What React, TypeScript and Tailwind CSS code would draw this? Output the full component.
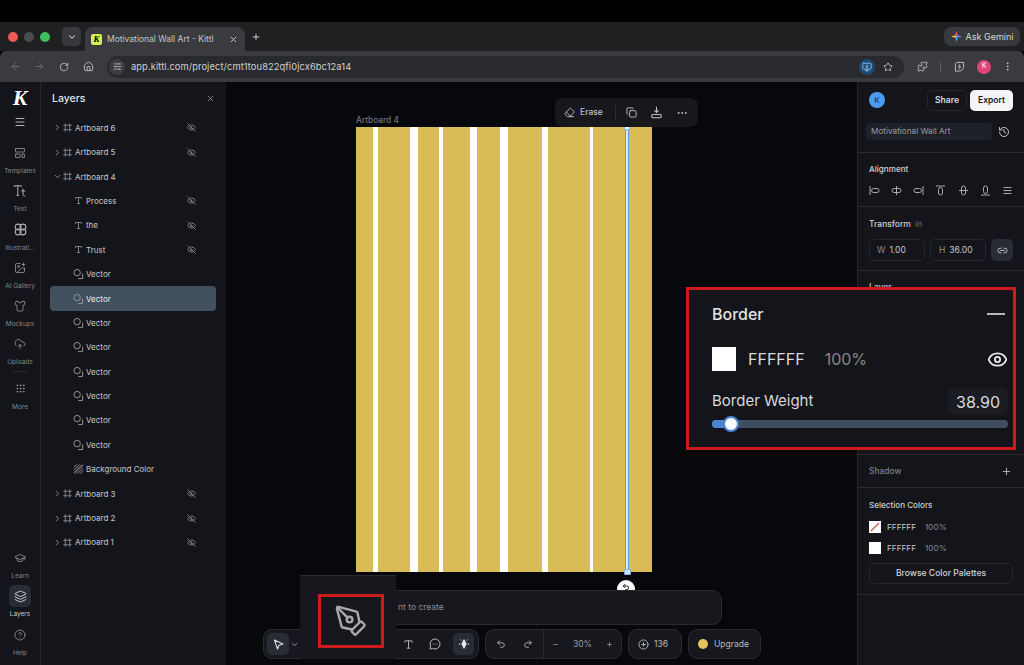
import React from "react";
import {
  ChevronDown, ChevronRight, X, Plus, ArrowLeft, ArrowRight, RotateCw, Home, SlidersHorizontal, MonitorDown, Star, Puzzle, EllipsisVertical,
  Menu, Frame, EyeOff, Type, LayoutTemplate, Shirt, CloudUpload, Grip, GraduationCap, Layers, CircleHelp, ImagePlus,
  Link2, History, Eraser, Copy, Ellipsis, PenTool, MessageCircleMore, Undo2, Redo2, Minus, CirclePlus, Eye,
} from "lucide-react";

const VectorIcon = () => (
  <svg width="12" height="12" viewBox="0 0 12 12" fill="none" stroke="currentColor" strokeWidth="1">
    <circle cx="4.5" cy="4.5" r="3.5" />
    <path d="M10.5 5.5V11H5.5" />
  </svg>
);
const HatchIcon = () => (
  <svg width="12" height="12" viewBox="0 0 12 12" fill="none" stroke="currentColor" strokeWidth="1">
    <path d="M1 4L4 1M1 7L7 1M1 10L10 1M2 11L11 2M5 11L11 5M8 11L11 8" />
  </svg>
);
const TtIcon = () => (
  <svg width="14" height="14" viewBox="0 0 16 16" fill="none" stroke="currentColor" strokeWidth="1.1">
    <path d="M1.5 3.5V2H9.5V3.5M5.5 2V13M4 13H7M9.5 8H14M11.5 5.5V12.5C11.5 13.5 12.5 14 14 13.5" />
  </svg>
);
const FlowerIcon = () => (
  <svg width="13" height="13" viewBox="0 0 16 16" fill="none" stroke="currentColor" strokeWidth="1.3">
    <circle cx="5" cy="5" r="3.6" /><circle cx="11" cy="5" r="3.6" /><circle cx="5" cy="11" r="3.6" /><circle cx="11" cy="11" r="3.6" />
  </svg>
);
const Sparkle = () => (
  <svg width="14" height="14" viewBox="0 0 14 14" fill="#e5e7eb">
    <path d="M7 3L9 7L7 11L5 7Z" stroke="#e5e7eb" strokeWidth="1.2" strokeLinejoin="round" />
    <path d="M2 7h1.5M10.5 7H12M3.5 2.5l1 1M10.5 2.5l-1 1" stroke="#e5e7eb" strokeWidth="1" />
  </svg>
);
const PlaceIcon = () => (
  <svg width="13" height="13" viewBox="0 0 16 16" fill="none" stroke="#c4c5c9" strokeWidth="1.3">
    <path d="M8 1V8M5.5 5.5L8 8L10.5 5.5" />
    <rect x="2" y="10.5" width="12" height="4" rx="2" />
  </svg>
);
const Gemini = () => (
  <svg width="11" height="11" viewBox="0 0 10 10">
    <path d="M5 0L6.2 3.8L5 5L3.8 3.8Z" fill="#e8655a" />
    <path d="M10 5L6.2 6.2L5 5L6.2 3.8Z" fill="#5b8ff0" />
    <path d="M5 10L3.8 6.2L5 5L6.2 6.2Z" fill="#5b8ff0" />
    <path d="M0 5L3.8 3.8L5 5L3.8 6.2Z" fill="#f2c14e" />
  </svg>
);
const BoltCircle = () => (
  <svg width="11" height="11" viewBox="0 0 12 12" fill="none" stroke="currentColor" strokeWidth="1">
    <path d="M3 1.5H10.5V6A5 5 0 0 1 5.5 11H1.5V5A3.5 3.5 0 0 1 3 1.5Z" />
    <path d="M6.5 3.5L4.8 6.2H7L5.5 8.8" />
  </svg>
);

const alignPaths = [
  <><path d="M1 1V10" /><rect x="2.5" y="3.5" width="7.5" height="4" rx="2" /></>,
  <><path d="M5.5 1V10" /><rect x="1" y="3.5" width="9" height="4" rx="2" /></>,
  <><path d="M10 1V10" /><rect x="1" y="3.5" width="7.5" height="4" rx="2" /></>,
  <><path d="M1 1H10" /><rect x="3.5" y="2.5" width="4" height="7.5" rx="2" /></>,
  <><path d="M1 5.5H10" /><rect x="3.5" y="1" width="4" height="9" rx="2" /></>,
  <><path d="M1 10H10" /><rect x="3.5" y="1" width="4" height="7.5" rx="2" /></>,
  <><path d="M1.5 2.5H9.5M1.5 5.5H9.5M1.5 8.5H9.5" /></>,
];

function RailItem({ icon, label, active }: { icon: React.ReactNode; label: string; active?: boolean }) {
  return (
    <div className="h-[38.3px] flex flex-col items-center justify-start">
      <div className={`w-[22px] h-[22px] shrink-0 flex items-center justify-center rounded-[5px] text-[#b4b5b9] ${active ? "bg-[#2a2c35] text-[#e8e8ea]" : ""}`}>{icon}</div>
      <div className={`text-[6.5px] leading-[9px] mt-[3px] whitespace-nowrap ${active ? "text-[#c8c9cc]" : "text-[#85878c]"}`}>{label}</div>
    </div>
  );
}

function Row({ indent, caret, icon, label, hidden, active }: { indent: number; caret?: "r" | "d"; icon: React.ReactNode; label: string; hidden?: boolean; active?: boolean }) {
  return (
    <div className={`h-[24.4px] flex items-center rounded-[4px] text-[8px] text-[#c6c7ca] ${active ? "bg-[#40505f] text-[#eceef0]" : ""}`}>
      <div className="flex items-center" style={{ paddingLeft: indent }}>
        {caret && (
          <span className="w-[9px] text-[#a8a9ad] flex">
            {caret === "r" ? <ChevronRight size={9} /> : <ChevronDown size={9} />}
          </span>
        )}
        <span className="w-[11px] flex justify-center text-[#9c9da2]">{icon}</span>
        <span className="ml-[2px] whitespace-nowrap">{label}</span>
      </div>
      {hidden && <EyeOff size={9} className="ml-auto mr-[20px] text-[#9c9da2]" />}
    </div>
  );
}

const stripes = [[17, 4.5], [54, 8], [83, 4], [114, 7], [144, 8], [186, 6], [234, 3]];

export default function App() {
  return (
    <div className="w-[1024px] h-[665px] overflow-hidden bg-black flex flex-col relative font-['Inter','Liberation_Sans',sans-serif]">
      {/* top black */}
      <div className="h-[22px] shrink-0 bg-black" />

      {/* tab bar */}
      <div className="h-[29px] shrink-0 bg-[#202023] flex items-center relative">
        <div className="flex items-center gap-[6px] ml-[8px] w-[48px] shrink-0">
          <span className="w-[10px] h-[10px] rounded-full bg-[#ee5a5a]" />
          <span className="w-[10px] h-[10px] rounded-full bg-[#4b4c50]" />
          <span className="w-[10px] h-[10px] rounded-full bg-[#3fc05e]" />
        </div>
        <div className="ml-[6px] w-[19px] h-[19px] rounded-[5px] bg-[#38393c] flex items-center justify-center text-[#d4d5d7]"><ChevronDown size={10} strokeWidth={2.5} /></div>
        <div className="ml-[4px] self-end w-[160px] h-[24px] rounded-t-[8px] bg-[#3a3b3e] flex items-center pl-[6px] pr-[7px]">
          <span className="w-[11px] h-[11px] rounded-[2px] bg-[#d6f04a] flex items-center justify-center text-[9px] leading-none font-bold italic text-black font-['Liberation_Serif',serif]">K</span>
          <span className="ml-[5px] text-[8.5px] text-[#c4c5c7] whitespace-nowrap">Motivational Wall Art - Kittl</span>
          <X size={9} className="ml-auto text-[#dcdcde]" strokeWidth={2.2} />
        </div>
        <Plus size={10} className="ml-[6px] text-[#d2d3d5]" strokeWidth={2.2} />
        <div className="ml-auto mr-[4px] w-[76px] h-[19px] rounded-[7px] bg-[#38393c] flex items-center justify-center gap-[4px] text-[9px] text-[#d6d7d9]">
          <Gemini /> <span>Ask Gemini</span>
        </div>
      </div>

      {/* url bar */}
      <div className="h-[31px] shrink-0 bg-[#3a3b3e] rounded-t-[6px] flex items-center text-[#c4c5c7]">
        <ArrowLeft size={11} className="ml-[10px] text-[#6d6e71]" />
        <ArrowRight size={11} className="ml-[13px] text-[#6d6e71]" />
        <RotateCw size={10} className="ml-[14px]" />
        <Home size={11} className="ml-[14px]" />
        <div className="ml-[13px] w-[797px] shrink-0 h-[22px] rounded-full bg-[#292a2d] flex items-center pl-[2px] pr-[11px]">
          <span className="w-[16px] h-[16px] rounded-full bg-[#3b3c40] flex items-center justify-center"><SlidersHorizontal size={9} /></span>
          <span className="ml-[6px] text-[9.3px] text-[#d0d1d3] tracking-[0.1px]">app.kittl.com/project/cmt1tou822qfi0jcx6bc12a14</span>
          <span className="ml-auto w-[16px] h-[16px] rounded-full bg-[#1d4a70] flex items-center justify-center text-[#9cc9f5]"><MonitorDown size={10} /></span>
          <Star size={10} className="ml-[8px]" />
        </div>
        <Puzzle size={11} className="ml-[13px]" />
        <span className="ml-[12px] w-px h-[11px] bg-[#5a5b5e]" />
        <span className="ml-[13px] flex"><BoltCircle /></span>
        <span className="ml-[12px] w-[14px] h-[14px] rounded-full bg-[#e0457b] flex items-center justify-center text-[7px] text-white">K</span>
        <EllipsisVertical size={11} className="ml-[11px]" />
      </div>

      {/* app */}
      <div className="flex-1 flex min-h-0 bg-[#07080c]">
        {/* rail */}
        <div className="w-[41px] shrink-0 bg-[#14151a] border-r border-[#26272c] flex flex-col items-center">
          <div className="h-[31px] flex items-center text-[22px] leading-none font-bold italic text-white font-['Liberation_Serif',serif]">K</div>
          <Menu size={12} className="text-[#b4b5b9] mt-[3px]" />
          <div className="mt-[14px] w-full">
            <RailItem icon={<LayoutTemplate size={12} strokeWidth={1.3} />} label="Templates" />
            <RailItem icon={<TtIcon />} label="Text" />
            <RailItem icon={<FlowerIcon />} label="Illustrati..." />
            <RailItem icon={<ImagePlus size={12} strokeWidth={1.3} />} label="AI Gallery" />
            <RailItem icon={<Shirt size={12} strokeWidth={1.3} />} label="Mockups" />
            <RailItem icon={<CloudUpload size={12} strokeWidth={1.3} />} label="Uploads" />
            <div className="w-[16px] h-px bg-[#2a2b30] mx-auto -mt-[1px] mb-[6px]" />
            <RailItem icon={<Grip size={11} strokeWidth={1.3} />} label="More" />
          </div>
          <div className="mt-auto mb-[3px] w-full">
            <RailItem icon={<GraduationCap size={12} strokeWidth={1.3} />} label="Learn" />
            <RailItem icon={<Layers size={13} strokeWidth={1.5} />} label="Layers" active />
            <RailItem icon={<CircleHelp size={12} strokeWidth={1.3} />} label="Help" />
          </div>
        </div>

        {/* layers */}
        <div className="w-[185px] shrink-0 bg-[#14151a] pl-[9px] pr-[10px]">
          <div className="h-[33.6px] flex items-center justify-between pl-[2px]">
            <span className="text-[10.5px] font-medium text-[#e2e3e5]">Layers</span>
            <X size={9} className="text-[#a0a1a5] mr-[1px]" />
          </div>
          <Row indent={3} caret="r" icon={<Frame size={9} />} label="Artboard 6" hidden />
          <Row indent={3} caret="r" icon={<Frame size={9} />} label="Artboard 5" hidden />
          <Row indent={3} caret="d" icon={<Frame size={9} />} label="Artboard 4" />
          <Row indent={23} icon={<Type size={9} />} label="Process" hidden />
          <Row indent={23} icon={<Type size={9} />} label="the" hidden />
          <Row indent={23} icon={<Type size={9} />} label="Trust" hidden />
          <Row indent={23} icon={<VectorIcon />} label="Vector" />
          <Row indent={23} icon={<VectorIcon />} label="Vector" active />
          <Row indent={23} icon={<VectorIcon />} label="Vector" />
          <Row indent={23} icon={<VectorIcon />} label="Vector" />
          <Row indent={23} icon={<VectorIcon />} label="Vector" />
          <Row indent={23} icon={<VectorIcon />} label="Vector" />
          <Row indent={23} icon={<VectorIcon />} label="Vector" />
          <Row indent={23} icon={<VectorIcon />} label="Vector" />
          <Row indent={23} icon={<HatchIcon />} label="Background Color" />
          <Row indent={3} caret="r" icon={<Frame size={9} />} label="Artboard 3" hidden />
          <Row indent={3} caret="r" icon={<Frame size={9} />} label="Artboard 2" hidden />
          <Row indent={3} caret="r" icon={<Frame size={9} />} label="Artboard 1" hidden />
        </div>

        {/* canvas */}
        <div className="flex-1 relative min-w-0">
          <div className="absolute left-[130px] top-[33px] text-[8.3px] leading-[11px] text-[#74757a] font-medium">Artboard 4</div>
          <div className="absolute left-[130px] top-[45px] w-[296px] h-[445px] bg-[#d9bc55]">
            {stripes.map(([x, w]) => (
              <div key={x} className="absolute top-0 bottom-0 bg-white" style={{ left: x, width: w }} />
            ))}
            <div className="absolute top-0 bottom-0 left-[269px] w-[4px] bg-[#dcebfa] border-x border-[#5a9be0]" />
            <div className="absolute -top-[2px] left-[268px] w-[6px] h-[5px] rounded-[1px] bg-white border border-[#7fb2e8]" />
            <div className="absolute -bottom-[3px] left-[267.5px] w-[7px] h-[6px] rounded-[1px] bg-[#cfe2f7] border border-[#7fb2e8]" />
          </div>

          {/* selection toolbar */}
          <div className="absolute left-[329px] top-[16px] w-[143px] h-[29px] rounded-[8px] bg-[#17181c] flex items-center text-[#c0c1c5]">
            <Eraser size={11} className="ml-[9px]" />
            <span className="ml-[5px] text-[8.5px] font-medium">Erase</span>
            <span className="ml-[12px] w-px h-[15px] bg-[#2c2d32]" />
            <Copy size={11} className="ml-[10px]" />
            <span className="ml-[13px] flex"><PlaceIcon /></span>
            <Ellipsis size={12} className="ml-[13px]" />
          </div>

          {/* rotate handle */}
          <div className="absolute left-[391px] top-[498px] w-[18px] h-[18px] rounded-full bg-white flex items-start justify-center pt-[3px] text-black"><Undo2 size={8} strokeWidth={2.6} /></div>

          {/* prompt */}
          <div className="absolute left-[74px] top-[508px] w-[422px] h-[35px] rounded-[10px] bg-[#17181d] border border-[#2a2b30] flex items-center pl-[97px] text-[8.5px] text-[#8a8b90]">
            nt to create
          </div>

          {/* bottom toolbar */}
          <div className="absolute left-[37px] top-[547px] flex gap-[6px] text-[#b8b9bd]">
            <div className="w-[216px] h-[30px] rounded-[9px] bg-[#17181d] border border-[#2a2b30] flex items-center pl-[3px]">
              <span className="w-[22px] h-[22px] rounded-[5px] bg-[#2a2c35] flex items-center justify-center text-[#dcdde0]">
                <svg width="11" height="11" viewBox="0 0 11 11" fill="none" stroke="currentColor" strokeWidth="1.1" strokeLinejoin="round"><path d="M1.5 1L10 5L6 6.2L4.5 10Z" /></svg>
              </span>
              <ChevronDown size={9} className="ml-[1px]" />
              <Type size={11} className="ml-[104px]" />
              <MessageCircleMore size={12} className="ml-[15px]" />
              <span className="ml-[12px] w-[21px] h-[22px] rounded-[5px] bg-[#2a2c35] flex items-center justify-center"><Sparkle /></span>
            </div>
            <div className="w-[137px] h-[30px] rounded-[9px] bg-[#17181d] border border-[#2a2b30] flex items-center text-[8.5px]">
              <Undo2 size={10} className="ml-[10px]" />
              <Redo2 size={10} className="ml-[17px]" />
              <span className="ml-[10px] w-px h-full bg-[#2a2b30]" />
              <Minus size={7} className="ml-[8px]" />
              <span className="ml-[14px] text-[#9a9ba0]">30%</span>
              <Plus size={7} className="ml-[14px]" />
            </div>
            <div className="w-[54px] h-[30px] rounded-[9px] bg-[#17181d] border border-[#2a2b30] flex items-center pl-[9px] gap-[5px] text-[8.5px]">
              <CirclePlus size={11} /><span>136</span>
            </div>
            <div className="w-[73px] h-[30px] rounded-[9px] bg-[#17181d] border border-[#2a2b30] flex items-center pl-[9px] gap-[6px] text-[8.5px]">
              <span className="w-[10px] h-[10px] rounded-full bg-[#e8c05c]" /><span>Upgrade</span>
            </div>
          </div>
        </div>

        {/* right */}
        <div className="w-[167px] shrink-0 bg-[#14151a] border-l border-[#26272c] flex flex-col">
          <div className="h-[36px] flex items-center pl-[11px] pr-[11px]">
            <span className="w-[16px] h-[16px] rounded-full bg-[#4a9df0] flex items-center justify-center text-[8px] text-[#10253c]">K</span>
            <span className="ml-auto w-[40px] h-[21px] rounded-[5px] border border-[#25262b] flex items-center justify-center text-[8.5px] font-semibold text-[#dcdde0]">Share</span>
            <span className="ml-[3px] w-[43px] h-[21px] rounded-[5px] bg-[#f3f4f6] flex items-center justify-center text-[8.5px] font-semibold text-[#17181c]">Export</span>
          </div>
          <div className="flex items-center pl-[8px] h-[19px] mt-[4px]">
            <span className="w-[126px] h-[17px] rounded-[3px] bg-[#1e2128] pl-[5px] flex items-center text-[8.2px] text-[#9a9ba0]">Motivational Wall Art</span>
            <History size={12} className="ml-[6px] text-[#c0c1c5]" />
          </div>
          <div className="mt-[11px] h-[55px] border-t border-b border-[#2a2b30] pl-[11px] pr-[11px]">
            <div className="text-[8.1px] font-medium text-[#d0d1d4] mt-[10px] leading-[12px]">Alignment</div>
            <div className="mt-[10px] flex justify-between text-[#a8a9ad]">
              {alignPaths.map((p, i) => (
                <svg key={i} width="11" height="11" viewBox="0 0 11 11" fill="none" stroke="currentColor" strokeWidth="1">{p}</svg>
              ))}
            </div>
          </div>
          <div className="h-[64px] border-b border-[#2a2b30] pl-[11px] pr-[11px]">
            <div className="mt-[11px] leading-[12px] text-[8.5px] font-medium text-[#d0d1d4]">Transform <span className="ml-[2px] text-[#6d6e73] font-normal">in</span></div>
            <div className="mt-[9px] flex gap-[5px] text-[8.5px]">
              <span className="w-[56px] h-[22px] rounded-[5px] border border-[#25262b] flex items-center pl-[7px] text-[#c6c7ca]"><span className="text-[#8e8f94] mr-[4px]">W</span>1.00</span>
              <span className="w-[56px] h-[22px] rounded-[5px] border border-[#25262b] flex items-center pl-[8px] text-[#c6c7ca]"><span className="text-[#8e8f94] mr-[4px]">H</span>36.00</span>
              <span className="w-[22px] h-[22px] rounded-[5px] bg-[#2a2c35] flex items-center justify-center text-[#c6c7ca]"><Link2 size={11} /></span>
            </div>
          </div>
          <div className="pl-[11px] pt-[10px] text-[8.5px] font-medium text-[#d0d1d4] leading-[12px] h-[184px] border-b border-[#2a2b30]">Layer</div>
          <div className="h-[33px] pt-[1px] border-b border-[#2a2b30] flex items-center justify-between pl-[11px] pr-[12px] text-[8.5px] text-[#8e8f94]">
            <span>Shadow</span><Plus size={11} className="text-[#b8b9bd]" />
          </div>
          <div className="h-[107px] border-b border-[#2a2b30] pl-[11px] pr-[11px]">
            <div className="mt-[11px] leading-[12px] text-[8.1px] font-medium text-[#d0d1d4]">Selection Colors</div>
            <div className="mt-[10px] h-[12px] flex items-center text-[8.2px] text-[#c6c7ca]">
              <svg width="12" height="12" viewBox="0 0 12 12" className="mr-[6px]"><rect width="12" height="12" fill="#fff" /><path d="M2 10L10 2" stroke="#d9534f" strokeWidth="1.3" /></svg>
              FFFFFF<span className="ml-[9px] text-[#85868b]">100%</span>
            </div>
            <div className="mt-[9px] h-[12px] flex items-center text-[8.2px] text-[#c6c7ca]">
              <span className="w-[12px] h-[12px] bg-white mr-[6px]" />
              FFFFFF<span className="ml-[9px] text-[#85868b]">100%</span>
            </div>
            <div className="mt-[9px] h-[21px] rounded-[5px] border border-[#25262b] flex items-center justify-center text-[8.6px] font-medium text-[#d0d1d4]">Browse Color Palettes</div>
          </div>
        </div>
      </div>

      {/* Annotation: border zoom */}
      <div className="absolute left-[686px] top-[287px] w-[330px] h-[163px] bg-[#14151a] border-[3px] border-[#cc1a1d] pl-[23px] pr-[5px] text-[#d8d9db]">
        <div className="mt-[13px] h-[22px] flex items-center justify-between pr-[3px]">
          <span className="text-[16px] font-medium text-[#e2e3e5]">Border</span>
          <span className="w-[18px] h-[2px] bg-[#b8b9bd]" />
        </div>
        <div className="mt-[21px] h-[26px] flex items-center">
          <span className="w-[24px] h-[24px] bg-white" />
          <span className="ml-[12px] text-[16px]">FFFFFF</span>
          <span className="ml-[20px] text-[16px] text-[#85868b]">100%</span>
          <Eye size={21} className="ml-auto text-[#e8e8ea]" />
        </div>
        <div className="mt-[16px] h-[27px] flex items-center justify-between">
          <span className="text-[15px]">Border Weight</span>
          <span className="w-[60px] h-[27px] rounded-[6px] bg-[#1b1c21] flex items-center justify-center text-[16px]">38.90</span>
        </div>
        <div className="mt-[5px] relative h-[8px] w-[296px] rounded-full bg-[#3f4f60]">
          <div className="w-[20px] h-full rounded-full bg-[#4a86d8]" />
          <div className="absolute left-[11px] -top-[4px] w-[16px] h-[16px] rounded-full bg-white border-2 border-[#4a86d8]" />
        </div>
      </div>

      {/* Annotation: pen */}
      <div className="absolute left-[300px] top-[575px] w-[96px] h-[84px] bg-[#17181d] border-t border-[#2a2b30] flex justify-start pl-[18px] pt-[18px]">
        <div className="w-[66px] h-[54px] border-[3px] border-[#cc1a1d] flex items-center justify-center text-[#a8a9ad]">
          <PenTool size={34} strokeWidth={1.7} />
        </div>
      </div>
    </div>
  );
}
